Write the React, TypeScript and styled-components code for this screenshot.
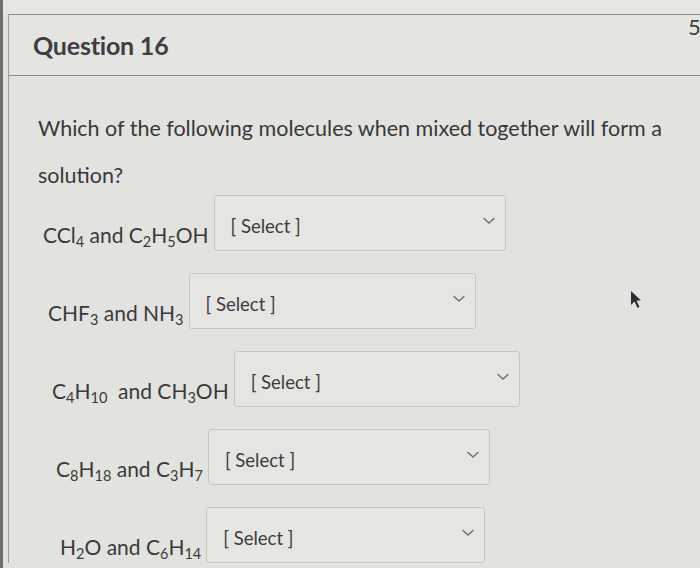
import React from "react";
import styled, { createGlobalStyle } from "styled-components";

const GlobalStyle = createGlobalStyle`
  html, body {
    margin: 0;
    padding: 0;
    background: #e2e2df;
  }
  body {
    font-family: Lato, "Liberation Sans", sans-serif;
    color: #3b3b3e;
  }
`;

type Part = { text: string; sub?: boolean };

const rows: { indent: number; width: number; label: Part[] }[] = [
  {
    indent: 0,
    width: 292,
    label: [
      { text: "CCl" },
      { text: "4", sub: true },
      { text: " and C" },
      { text: "2", sub: true },
      { text: "H" },
      { text: "5", sub: true },
      { text: "OH" },
    ],
  },
  {
    indent: 5,
    width: 287,
    label: [
      { text: "CHF" },
      { text: "3", sub: true },
      { text: " and NH" },
      { text: "3", sub: true },
    ],
  },
  {
    indent: 9,
    width: 286,
    label: [
      { text: "C" },
      { text: "4", sub: true },
      { text: "H" },
      { text: "10", sub: true },
      { text: "  and CH" },
      { text: "3", sub: true },
      { text: "OH" },
    ],
  },
  {
    indent: 13,
    width: 282,
    label: [
      { text: "C" },
      { text: "8", sub: true },
      { text: "H" },
      { text: "18", sub: true },
      { text: " and C" },
      { text: "3", sub: true },
      { text: "H" },
      { text: "7", sub: true },
    ],
  },
  {
    indent: 17,
    width: 279,
    label: [
      { text: "H" },
      { text: "2", sub: true },
      { text: "O and C" },
      { text: "6", sub: true },
      { text: "H" },
      { text: "14", sub: true },
    ],
  },
];

const Chevron = () => (
  <svg width="12" height="8" viewBox="0 0 12 8">
    <path
      d="M1 1.5 L6 6 L11 1.5"
      fill="none"
      stroke="#6c6c70"
      strokeWidth="1.4"
      strokeLinecap="round"
      strokeLinejoin="round"
    />
  </svg>
);

const Cursor = () => (
  <CursorMark width="12" height="20" viewBox="0 0 12 20">
    <path d="M1 1 L1 15 L4.5 11.5 L7.5 18 L9.5 17 L6.5 10.5 L11 10.5 Z" fill="#2e2e36" />
  </CursorMark>
);

export default function App() {
  return (
    <>
      <GlobalStyle />
      <Page>
        <TopStrip />
        <Panel>
          <Header>
            <Title>Question 16</Title>
            <Points>5 pts</Points>
          </Header>
          <Body>
            <Prompt>
              Which of the following molecules when mixed together will form a
              solution?
            </Prompt>
            <Rows>
              {rows.map((row, i) => (
                <Row key={i} $indent={row.indent}>
                  <Label>
                    {row.label.map((p, j) =>
                      p.sub ? <Sub key={j}>{p.text}</Sub> : <span key={j}>{p.text}</span>
                    )}
                  </Label>
                  <SelectBox $width={row.width}>
                    <SelectText>[ Select ]</SelectText>
                    <Chevron />
                  </SelectBox>
                </Row>
              ))}
            </Rows>
          </Body>
        </Panel>
        <Cursor />
      </Page>
    </>
  );
}

const Page = styled.div`
  position: relative;
  width: 700px;
  height: 568px;
  overflow: hidden;
  border-left: 3px solid #6e6e70;
  box-sizing: border-box;
  background: #e2e2df;
`;

const TopStrip = styled.div`
  height: 14px;
  background: #e6e6e3;
`;

const Panel = styled.div`
  margin-left: 5px;
  border-left: 1px solid #9c9c9c;
  border-top: 1px solid #8e8e8e;
`;

const Header = styled.div`
  height: 60px;
  display: flex;
  justify-content: space-between;
  align-items: center;
  padding-left: 24px;
  background: #e4e4e1;
  border-bottom: 1.5px solid #8a8a8a;
  overflow: hidden;
`;

const Title = styled.div`
  font-size: 25px;
  font-weight: 700;
  color: #3e3e42;
  letter-spacing: -0.2px;
`;

const Points = styled.div`
  align-self: flex-start;
  margin-top: -2px;
  font-size: 22px;
  color: #3e3e42;
  width: 12px;
  white-space: nowrap;
`;

const Body = styled.div`
  padding: 29px 0 0 29px;
`;

const Prompt = styled.p`
  margin: 0;
  width: 650px;
  font-size: 21.5px;
  line-height: 47px;
  color: #38383b;
`;

const Rows = styled.div`
  margin-top: -4px;
  display: flex;
  flex-direction: column;
  gap: 22px;
`;

const Row = styled.div<{ $indent: number }>`
  display: flex;
  align-items: center;
  gap: 5px;
  padding-left: ${(p) => 5 + p.$indent}px;
`;

const Label = styled.div`
  font-size: 21px;
  color: #3a3a3d;
  white-space: pre;
  margin-top: 22px;
`;

const Sub = styled.sub`
  font-size: 14.5px;
  vertical-align: -4px;
  line-height: 0;
`;

const SelectBox = styled.div<{ $width: number }>`
  width: ${(p) => p.$width}px;
  height: 56px;
  box-sizing: border-box;
  display: flex;
  align-items: center;
  justify-content: space-between;
  padding: 0 10px 4px 16px;
  border: 1.5px solid #c6c6c3;
  border-radius: 3px;
  background: #e5e5e2;
`;

const SelectText = styled.span`
  font-size: 18.5px;
  color: #3c3c40;
  margin-top: 10px;
`;

const CursorMark = styled.svg`
  position: absolute;
  left: 627px;
  top: 290px;
  filter: blur(0.4px);
`;
